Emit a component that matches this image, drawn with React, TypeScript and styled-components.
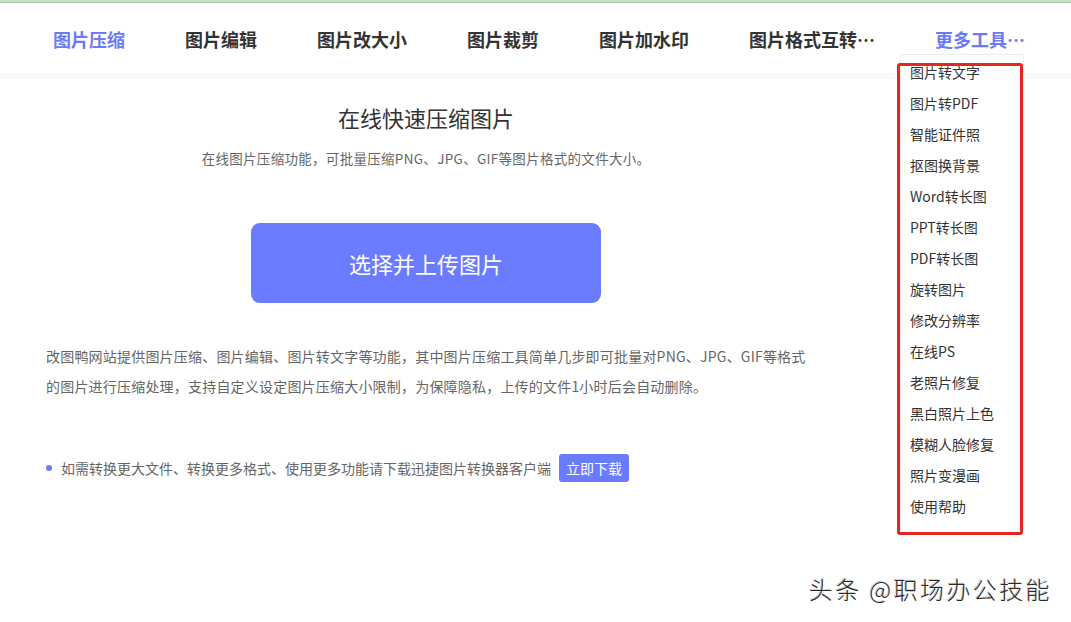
import { createGlobalStyle } from 'styled-components'
import styled from 'styled-components'

const GlobalStyle = createGlobalStyle`
  html, body {
    margin: 0;
    padding: 0;
    background: #fff;
  }
  body {
    font-family: "Noto Sans CJK SC", "Noto Sans", "Liberation Sans", sans-serif;
    color: #333;
  }
`

const Page = styled.div`
  position: relative;
  min-height: 622px;
  overflow: hidden;
`

const TopStrip = styled.div`
  height: 2px;
  background: #c8e0c8;
  border-bottom: 1px solid #a9c8a9;
`

const Header = styled.header`
  height: 70px;
  background: #fff;
  border-bottom: 6px solid #f8f8f8;
`

const Nav = styled.nav`
  display: flex;
  align-items: center;
  gap: 60px;
  height: 100%;
  padding: 2px 0 0 53px;
  box-sizing: border-box;
`

const NavItem = styled.a<{ $active?: boolean }>`
  position: relative;
  font-size: 18px;
  font-weight: 700;
  line-height: 68px;
  white-space: nowrap;
  color: ${({ $active }) => ($active ? '#6b7af5' : '#333')};
  text-decoration: none;
  cursor: pointer;
`

const Dropdown = styled.div`
  position: absolute;
  top: 49px;
  left: -35px;
  width: 124px;
  box-sizing: border-box;
  background: #fff;
  border: 1px solid #ececec;
  border-radius: 4px;
  padding: 2px 0 11px;
  z-index: 5;
`

const DropItem = styled.div`
  font-size: 14px;
  font-weight: 400;
  line-height: 31px;
  padding-left: 9px;
  color: #333;
`

const Highlight = styled.div`
  position: absolute;
  top: 8px;
  left: -4px;
  width: 126px;
  height: 472px;
  box-sizing: border-box;
  border: 3px solid #e5281f;
  border-radius: 3px;
  pointer-events: none;
`

const Main = styled.main`
  width: 760px;
  margin-left: 46px;
  display: flex;
  flex-direction: column;
`

const Title = styled.h1`
  margin: 23px 0 0;
  font-size: 22px;
  font-weight: 400;
  line-height: 30px;
  text-align: center;
  color: #333;
`

const Subtitle = styled.p`
  margin: 16px 0 0;
  font-size: 13.5px;
  letter-spacing: 0.3px;
  line-height: 20px;
  text-align: center;
  color: #666;
`

const UploadButton = styled.button`
  align-self: center;
  margin-top: 55px;
  width: 350px;
  height: 80px;
  border: none;
  border-radius: 9px;
  background: #6b7bfd;
  color: #fff;
  font-family: inherit;
  font-size: 22px;
  cursor: pointer;
`

const Intro = styled.p`
  margin: 38px 0 0;
  font-size: 14px;
  letter-spacing: 0.2px;
  line-height: 30px;
  color: #666;
  white-space: nowrap;
`

const TipRow = styled.div`
  display: flex;
  align-items: center;
  margin-top: 53px;
`

const Dot = styled.span`
  width: 6px;
  height: 6px;
  border-radius: 50%;
  background: #6b7bfd;
  margin: 0 9px 0 0;
`

const TipText = styled.span`
  font-size: 14px;
  color: #666;
`

const DownloadButton = styled.button`
  margin-left: 8px;
  height: 28px;
  padding: 0 7px;
  border: none;
  border-radius: 3px;
  background: #6b7bfd;
  color: #fff;
  font-family: inherit;
  font-size: 14px;
  cursor: pointer;
`

const Watermark = styled.div`
  position: absolute;
  right: 19px;
  bottom: 16px;
  font-size: 24px;
  font-weight: 300;
  color: #2a2a2a;
  text-shadow: 1px 1px 0 #fff, -1px -1px 0 rgba(0, 0, 0, 0.2);
  letter-spacing: 2.4px;
`

const navItems = ['图片压缩', '图片编辑', '图片改大小', '图片裁剪', '图片加水印', '图片格式互转…']

const moreTools = [
  '图片转文字',
  '图片转PDF',
  '智能证件照',
  '抠图换背景',
  'Word转长图',
  'PPT转长图',
  'PDF转长图',
  '旋转图片',
  '修改分辨率',
  '在线PS',
  '老照片修复',
  '黑白照片上色',
  '模糊人脸修复',
  '照片变漫画',
  '使用帮助',
]

export default function App() {
  return (
    <Page>
      <GlobalStyle />
      <TopStrip />
      <Header>
        <Nav>
          {navItems.map((item, i) => (
            <NavItem key={item} $active={i === 0}>
              {item}
            </NavItem>
          ))}
          <NavItem $active>
            更多工具…
            <Dropdown>
              {moreTools.map((tool) => (
                <DropItem key={tool}>{tool}</DropItem>
              ))}
              <Highlight />
            </Dropdown>
          </NavItem>
        </Nav>
      </Header>

      <Main>
        <Title>在线快速压缩图片</Title>
        <Subtitle>在线图片压缩功能，可批量压缩PNG、JPG、GIF等图片格式的文件大小。</Subtitle>
        <UploadButton>选择并上传图片</UploadButton>
        <Intro>
          改图鸭网站提供图片压缩、图片编辑、图片转文字等功能，其中图片压缩工具简单几步即可批量对PNG、JPG、GIF等格式
          <br />
          的图片进行压缩处理，支持自定义设定图片压缩大小限制，为保障隐私，上传的文件1小时后会自动删除。
        </Intro>
        <TipRow>
          <Dot />
          <TipText>如需转换更大文件、转换更多格式、使用更多功能请下载迅捷图片转换器客户端</TipText>
          <DownloadButton>立即下载</DownloadButton>
        </TipRow>
      </Main>

      <Watermark>头条 @职场办公技能</Watermark>
    </Page>
  )
}
